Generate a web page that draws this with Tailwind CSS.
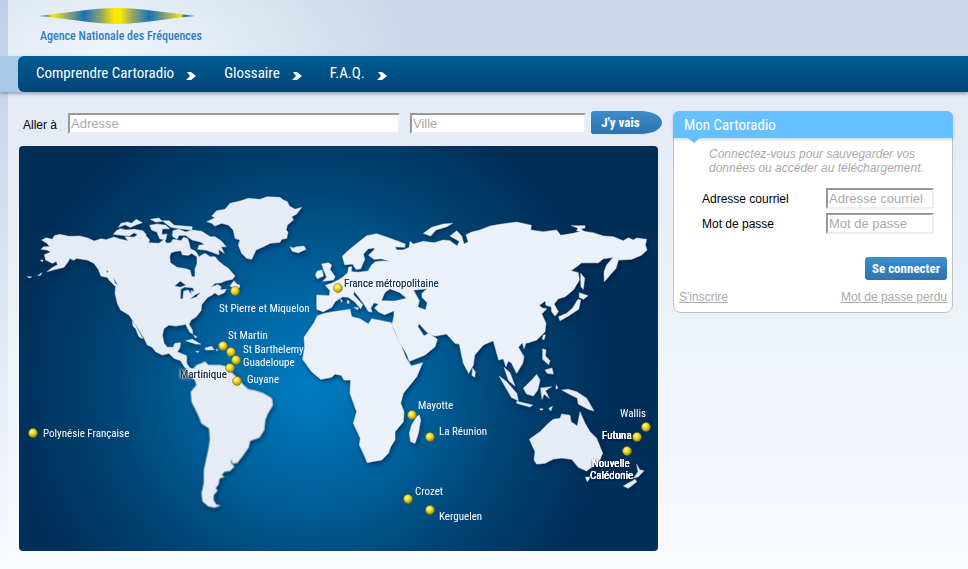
<!DOCTYPE html>
<html lang="fr">
<head>
    <meta charset="UTF-8">
    <meta name="viewport" content="width=device-width, initial-scale=1.0">
    <title>Cartoradio</title>
    <script src="https://cdn.jsdelivr.net/npm/@tailwindcss/browser@4"></script>
</head>
<body class="min-h-screen bg-linear-to-b from-[#e4ebf5] from-20% to-[#f8fafe] font-['Liberation_Sans',Arial,sans-serif] text-xs text-black">
    <div class="min-h-screen bg-linear-to-b from-[#bfd0e6] to-[#f8fafe] pl-2">
        <div class="min-h-screen bg-linear-to-b from-[#e4ebf5] from-20% to-[#f8fafe]">
            <header class="h-14 bg-[#cbd8e9] bg-[radial-gradient(ellipse_300px_150px_at_100px_56px,#f0f4fa,#e2eaf4_40%,#cbd8e9)] pl-[31px] pt-2">
                <a href="/" class="block w-[156px]">
                    <svg class="h-4 w-full" viewBox="0 0 156 16" aria-hidden="true">
                        <defs>
                            <linearGradient id="wave">
                                <stop offset="0" stop-color="#2378b5" />
                                <stop offset=".05" stop-color="#7ba27c" />
                                <stop offset=".09" stop-color="#f4e500" />
                                <stop offset=".17" stop-color="#a0ae62" />
                                <stop offset=".29" stop-color="#1772b8" />
                                <stop offset=".4" stop-color="#91a768" />
                                <stop offset=".48" stop-color="#f8e800" />
                                <stop offset=".52" stop-color="#f8e800" />
                                <stop offset=".6" stop-color="#91a768" />
                                <stop offset=".71" stop-color="#1772b8" />
                                <stop offset=".83" stop-color="#a0ae62" />
                                <stop offset=".91" stop-color="#f4e500" />
                                <stop offset=".93" stop-color="#2378b5" />
                                <stop offset="1" stop-color="#2378b5" />
                            </linearGradient>
                        </defs>
                        <path d="M0 8 C25 5 55 0 78 0 C101 0 131 5 156 8 C131 10 101 16 78 16 C55 16 25 10 0 8Z" fill="url(#wave)" />
                    </svg>
                    <span class="mt-1 block whitespace-nowrap pl-px font-['Roboto_Condensed',sans-serif] text-xs leading-4 font-medium text-[#2c7fbd]">Agence Nationale des Fréquences</span>
                </a>
            </header>

            <div class="-ml-2 bg-[#a9c8e6] pl-[18px] shadow-[0_2px_3px_rgba(60,80,110,0.45)]">
                <nav class="flex h-9 items-center gap-7 rounded-l-md bg-linear-to-b from-[#005b94] to-[#004675] pl-[18px] font-['Roboto_Condensed',sans-serif] text-[15px] text-white">
                    <a href="#comprendre" class="flex items-center gap-3">Comprendre Cartoradio
                        <svg class="mt-1 h-2 w-[10px]" viewBox="0 0 10 8" fill="currentColor"><path d="M1 0 H5 L10 4 L5 8 H0 L4 4Z" /></svg>
                    </a>
                    <a href="#glossaire" class="flex items-center gap-3">Glossaire
                        <svg class="mt-1 h-2 w-[10px]" viewBox="0 0 10 8" fill="currentColor"><path d="M1 0 H5 L10 4 L5 8 H0 L4 4Z" /></svg>
                    </a>
                    <a href="#faq" class="flex items-center gap-3">F.A.Q.
                        <svg class="mt-1 h-2 w-[10px]" viewBox="0 0 10 8" fill="currentColor"><path d="M1 0 H5 L10 4 L5 8 H0 L4 4Z" /></svg>
                    </a>
                </nav>
            </div>

            <main class="grid grid-cols-[1fr_280px] items-start gap-[15px] pt-[19px] pr-[15px] pb-4 pl-[11px]">
                <section>
                    <form class="-mr-1 mb-3 flex h-[23px] items-center pl-1">
                        <label for="adresse" class="mr-[11px] whitespace-nowrap pt-1">Aller à</label>
                        <input type="text" id="adresse" placeholder="Adresse" class="mr-[10px] mt-px h-[21px] w-0 flex-23 border-2 border-t-[#999] border-r-[#eee] border-b-[#eee] border-l-[#999] bg-white px-px text-[13px] placeholder:text-[#a9a9a9]">
                        <input type="text" id="ville" placeholder="Ville" aria-label="Ville" class="mr-[5px] mt-px h-[21px] w-0 flex-12 border-2 border-t-[#999] border-r-[#eee] border-b-[#eee] border-l-[#999] bg-white px-px text-[13px] placeholder:text-[#a9a9a9]">
                        <button type="submit" class="h-[23px] w-[71px] rounded-[3px_22px_22px_3px/3px_12px_12px_3px] bg-linear-to-b from-[#3d8ecb] to-[#2d73b0] pr-3 font-['Roboto_Condensed',sans-serif] text-[13px] leading-5 font-bold text-white">J'y vais</button>
                    </form>

                    <svg class="block w-full rounded-[4px]" viewBox="19 146 639 405" role="img" aria-label="Carte du monde">
                        <defs>
                            <radialGradient id="sea" gradientUnits="userSpaceOnUse" cx="310" cy="385" r="300">
                                <stop offset="0" stop-color="#007ec3" />
                                <stop offset=".35" stop-color="#00629d" />
                                <stop offset=".7" stop-color="#004272" />
                                <stop offset="1" stop-color="#002f59" />
                            </radialGradient>
                            <radialGradient id="pin" cx=".4" cy=".35" r=".65">
                                <stop offset="0" stop-color="#fffbb0" />
                                <stop offset=".4" stop-color="#f4df2c" />
                                <stop offset="1" stop-color="#a88a00" />
                            </radialGradient>
                            <filter id="shadow" x="-5%" y="-5%" width="110%" height="115%">
                                <feDropShadow dx="1" dy="2" stdDeviation="2" flood-color="#001c3c" flood-opacity=".7" />
                            </filter>
                            <filter id="glow" x="-20%" y="-50%" width="140%" height="200%">
                                <feDropShadow dx="0" dy="0" stdDeviation="1.5" flood-color="#fff" flood-opacity="1" result="halo" />
                                <feMerge><feMergeNode in="halo" /><feMergeNode in="halo" /><feMergeNode in="SourceGraphic" /></feMerge>
                            </filter>
                            <filter id="dark" x="-20%" y="-50%" width="140%" height="200%">
                                <feDropShadow dx="0" dy="1" stdDeviation="1" flood-color="#001c3c" flood-opacity="1" result="halo" />
                                <feMerge><feMergeNode in="halo" /><feMergeNode in="halo" /><feMergeNode in="SourceGraphic" /></feMerge>
                            </filter>
                        </defs>
                        <rect x="19" y="146" width="639" height="405" fill="url(#sea)" />

                        <g fill="#e5ecf6" fill-rule="evenodd" stroke="#e5ecf6" stroke-width="1" stroke-linejoin="round" filter="url(#shadow)">
                            <!-- Amérique du Nord -->
                            <g transform="translate(19 190) scale(.3333)">
                                <path d="M68 150 L82 143 L100 148 L106 137 L122 133 L150 139 L182 138 L206 144 L226 153 L246 146 L262 149 L284 141 L302 147 L328 153 L318 140 L345 142 L362 130 L378 134 L392 150 L388 158 L420 160 L436 148 L442 160 L456 158 L462 148 L486 152 L494 142 L506 146 L510 158 L514 176 L530 184 L540 200 L558 190 L573 200 L588 200 L598 212 L613 225 L628 235 L648 258 L640 268 L620 272 L606 278 L588 280 L576 292 L596 284 L606 290 L604 300 L622 298 L616 308 L598 316 L588 308 L578 316 L566 322 L556 334 L548 344 L546 362 L530 382 L516 390 L510 403 L520 420 L521 432 L512 426 L500 403 L470 408 L450 405 L435 415 L430 435 L435 460 L445 472 L462 472 L468 460 L485 458 L482 475 L475 486 L490 492 L503 497 L503 520 L512 534 L535 540 L525 546 L497 532 L485 512 L465 505 L450 490 L430 495 L410 485 L400 472 L385 465 L375 444 L360 420 L350 404 L330 375 L305 360 L295 340 L288 310 L290 290 L272 272 L265 262 L246 258 L238 238 L225 220 L205 210 L172 205 L165 211 L152 205 L148 214 L135 232 L110 238 L84 245 L98 234 L116 224 L112 214 L100 220 L80 210 L76 194 L96 186 L84 180 L66 178 L74 170 L92 170 L84 160Z
                                    M452 200 L456 188 L470 184 L486 182 L490 194 L508 196 L518 190 L534 200 L534 222 L528 236 L528 260 L518 260 L513 240 L500 236 L474 232 L454 218Z
                                    M466 288 L484 273 L502 286 L484 292Z M484 328 L485 298 L496 291 L522 293 L526 306 L516 302 L518 314 L507 300 L494 304 L492 326Z M512 328 L528 314 L546 306 L532 322Z
                                    M262 240 L270 246 L264 248Z M282 262 L298 286 L288 280Z" />
                                <path d="M283 133 L292 122 L304 116 L322 120 L346 118 L372 122 L382 134 L366 140 L346 128 L330 138 L310 136Z M298 112 L306 100 L326 96 L338 100 L352 88 L370 98 L352 104 L334 112 L318 104Z M394 88 L420 84 L430 94 L410 96Z M392 106 L414 102 L440 106 L452 116 L430 116 L428 134 L444 132 L440 150 L422 146 L414 126 L398 120Z M430 92 L450 92 L466 106 L496 108 L520 110 L518 120 L484 116 L456 112Z
                                    M462 122 L480 118 L500 126 L520 120 L548 124 L574 140 L588 140 L606 152 L622 170 L606 170 L616 190 L598 178 L600 194 L578 186 L560 180 L536 178 L540 166 L556 164 L546 156 L520 150 L500 136 L480 136 L474 148 L460 138Z" />
                                <path d="M24 260 L38 260 L32 264Z M56 257 L68 248 L66 255Z M64 210 L72 210 L70 216Z M340 393 L348 402 L360 425 L372 446 L360 440 L350 416 L342 408Z M242 238 L250 244 L258 260 L248 254Z" />
                                <path d="M500 452 L520 448 L546 463 L530 462Z M558 474 L578 469 L586 479 L560 480Z M530 483 L540 484 L536 488Z M592 478 L598 480 L592 482Z M524 436 L534 440 L530 444Z" />
                            </g>
                            <!-- Groenland, Islande, Terre-Neuve -->
                            <g transform="translate(180 190) scale(.3333)">
                                <path d="M80 95 L105 83 L95 78 L110 62 L135 58 L150 40 L180 33 L205 25 L240 28 L262 20 L300 22 L310 30 L322 35 L328 48 L345 58 L365 52 L350 72 L335 80 L340 90 L322 105 L318 120 L324 126 L320 145 L305 148 L300 157 L270 160 L250 170 L228 180 L215 208 L200 205 L185 190 L175 165 L180 150 L165 145 L160 120 L145 105 L125 100 L104 108 L96 100Z" />
                                <path d="M330 170 L340 174 L350 170 L372 168 L378 178 L355 188 L337 184Z M150 288 L162 272 L170 282 L180 286 L176 296 L160 293Z" />
                            </g>
                            <!-- Amérique du Sud -->
                            <g transform="translate(180 360) scale(.3333)">
                                <path d="M18 22 L38 28 L50 15 L65 10 L75 5 L85 15 L120 15 L140 20 L155 38 L178 60 L190 75 L205 88 L225 92 L250 100 L275 115 L278 135 L262 162 L255 180 L252 210 L238 232 L210 242 L205 262 L190 284 L172 308 L158 310 L154 295 L152 308 L162 320 L150 332 L132 335 L124 346 L132 350 L118 355 L115 372 L106 385 L112 392 L100 405 L100 420 L108 434 L120 437 L102 442 L85 438 L68 424 L65 400 L72 370 L72 330 L85 270 L90 240 L88 205 L65 190 L55 165 L35 125 L33 95 L50 75 L45 60 L25 40Z" />
                            </g>
                            <!-- Eurasie et Afrique -->
                            <g transform="translate(300 200) scale(.3333)" fill="#ebf1f8" stroke="#ebf1f8">
                                <path d="M50 285 L88 287 L90 272 L76 256 L95 250 L115 240 L130 230 L143 218 L146 202 L155 200 L154 215 L175 217 L204 213 L214 196 L226 185 L250 183 L272 184 L244 176 L222 178 L206 166 L222 150 L225 143 L205 146 L190 162 L194 178 L182 206 L168 208 L158 192 L134 194 L127 168 L150 147 L175 127 L200 107 L230 101 L262 112 L290 122 L316 132 L314 142 L285 140 L290 150 L310 150 L328 142 L330 124 L340 132 L370 124 L402 128 L430 120 L450 122 L460 130 L472 138 L478 124 L450 108 L470 92 L485 108 L492 132 L505 126 L498 104 L515 96 L540 90 L570 78 L605 72 L650 66 L694 76 L692 90 L730 95 L770 90 L782 106 L820 100 L845 93 L880 98 L910 108 L940 110 L970 122 L985 113 L1000 120 L1010 114 L1040 118 L1036 134 L1041 150 L1025 165 L995 178 L955 180 L948 205 L930 225 L913 245 L912 215 L920 195 L940 172 L910 176 L895 188 L845 188 L830 200 L812 212 L835 218 L838 240 L820 270 L795 290 L775 296 L762 312 L775 335 L765 348 L755 335 L754 320 L738 316 L736 302 L718 316 L726 324 L740 326 L725 342 L738 370 L735 395 L710 420 L685 428 L665 430 L655 442 L672 470 L668 490 L650 520 L635 490 L625 482 L618 500 L610 476 L596 480 L580 422 L565 428 L550 435 L524 465 L520 495 L506 520 L490 490 L478 432 L465 430 L440 402 L405 408 L386 402 L378 394 L356 370 L354 380 L372 408 L386 400 L412 418 L405 440 L375 465 L328 484 L320 462 L298 426 L282 388 L276 374 L282 348 L282 332 L254 344 L236 336 L224 324 L236 312 L222 308 L212 324 L216 336 L205 334 L192 312 L174 288 L163 274 L160 284 L188 314 L182 326 L165 306 L145 292 L128 290 L105 305 L95 322 L70 335 L50 328Z
                                    M254 278 L270 266 L300 278 L320 295 L284 303 L244 302Z M340 270 L382 266 L366 280 L366 292 L382 308 L377 330 L353 321 L358 302Z" />
                                <path d="M75 340 L100 335 L150 328 L155 350 L180 356 L205 372 L215 356 L245 362 L274 368 L282 392 L304 438 L318 474 L334 498 L368 488 L350 530 L310 580 L302 610 L312 635 L310 665 L285 695 L285 720 L272 740 L265 760 L245 780 L215 785 L202 788 L190 760 L178 735 L181 715 L160 670 L170 635 L150 580 L152 540 L132 540 L124 526 L105 522 L95 532 L62 538 L35 515 L8 478 L14 440 L12 412 L42 368 L52 347Z" />
                                <path d="M65 192 L85 188 L95 195 L90 208 L105 230 L100 240 L68 244 L80 232 L72 212Z M52 213 L66 210 L70 228 L52 236 L46 225Z M370 100 L395 82 L430 72 L458 70 L440 80 L408 90 L392 108Z M142 302 h5 v8 h-5Z M162 322 l14 2 l-4 5Z M122 298 l5 4 l-3 5Z M240 374 L250 366 L246 372Z" />
                                <path d="M350 650 L358 645 L362 660 L355 700 L345 730 L332 725 L328 700 L335 675Z M518 505 L526 515 L524 532 L516 526Z" />
                                <path d="M814 77 L855 77 L855 84 L842 86 L854 96 L830 92 L834 84Z M842 220 L854 235 L850 268 L843 260Z M838 278 L864 287 L850 298 L838 292Z M834 298 L842 300 L836 328 L805 348 L780 362 L776 350 L800 340 L818 324Z M730 406 l6 -2 l-4 16 l-5 -4Z M668 430 l10 -2 l-6 18Z" />
                            </g>
                            <!-- Océanie -->
                            <g transform="translate(490 330) scale(.3333)">
                                <path d="M118 328 L150 305 L175 280 L190 268 L210 265 L215 252 L240 256 L243 275 L262 288 L270 245 L285 280 L300 305 L320 325 L338 370 L325 400 L300 415 L290 423 L265 412 L245 388 L215 384 L190 387 L165 400 L140 402 L132 390 L135 365Z M286 442 L302 440 L292 455Z M440 403 L450 420 L462 422 L445 440 L430 445 L444 426Z M435 448 L440 455 L415 475 L400 468Z" />
                                <path d="M215 180 L235 178 L260 185 L290 205 L312 243 L295 238 L265 222 L262 204 L245 196Z M100 175 L125 150 L140 133 L150 150 L143 180 L130 198 L110 192Z M27 138 L50 155 L80 190 L85 212 L64 202Z M42 112 L60 128 L75 168 L56 152Z M80 214 L128 225 L120 231 L80 220Z M152 174 L185 170 L166 182 L178 205 L162 192 L156 208Z M158 56 L168 60 L166 78 L180 92 L176 104 L158 88Z M165 120 L186 114 L190 132 L172 130Z M176 235 l12 -6 l-6 14Z M150 236 h8 v4 h-8Z M198 164 l6 10 l-6 4Z" />
                            </g>
                        </g>

                        <g fill="url(#pin)" stroke="#6d6a22" stroke-width=".5">
                            <circle cx="338" cy="288" r="4.5" />
                            <circle cx="235" cy="291" r="4.5" />
                            <circle cx="223" cy="346" r="4.5" />
                            <circle cx="231" cy="352" r="4.5" />
                            <circle cx="236" cy="360" r="4.5" />
                            <circle cx="230" cy="368" r="4.5" />
                            <circle cx="237" cy="381" r="4.5" />
                            <circle cx="412" cy="415" r="4.5" />
                            <circle cx="430" cy="437" r="4.5" />
                            <circle cx="408" cy="499" r="4.5" />
                            <circle cx="430" cy="510" r="4.5" />
                            <circle cx="33" cy="433" r="4.5" />
                            <circle cx="646" cy="427" r="4.5" />
                            <circle cx="637" cy="437" r="4.5" />
                            <circle cx="627" cy="451" r="4.5" />
                        </g>

                        <g class="font-['Roboto_Condensed',sans-serif] text-[11px]" fill="#fff">
                            <a href="#france"><text x="344" y="287" fill="#0b3a63" filter="url(#glow)">France métropolitaine</text></a>
                            <a href="#miquelon"><text x="219" y="312">St Pierre et Miquelon</text></a>
                            <a href="#martin"><text x="228" y="339">St Martin</text></a>
                            <a href="#barthelemy"><text x="243" y="353">St Barthelemy</text></a>
                            <a href="#guadeloupe"><text x="243" y="366">Guadeloupe</text></a>
                            <a href="#martinique"><text x="180" y="378" fill="#12304c" filter="url(#glow)">Martinique</text></a>
                            <a href="#guyane"><text x="247" y="383">Guyane</text></a>
                            <a href="#mayotte"><text x="418" y="409">Mayotte</text></a>
                            <a href="#reunion"><text x="439" y="435">La Réunion</text></a>
                            <a href="#crozet"><text x="415" y="495">Crozet</text></a>
                            <a href="#kerguelen"><text x="439" y="520">Kerguelen</text></a>
                            <a href="#polynesie"><text x="43" y="437">Polynésie Française</text></a>
                            <a href="#wallis"><text x="620" y="417">Wallis</text></a>
                            <a href="#futuna"><text x="602" y="439" filter="url(#dark)">Futuna</text></a>
                            <a href="#caledonie" filter="url(#dark)"><text x="592" y="467">Nouvelle</text><text x="590" y="479">Calédonie</text></a>
                        </g>
                    </svg>
                </section>

                <aside class="rounded-lg border border-[#bcc3cc] bg-white">
                    <h2 class="relative -mx-px -mt-px h-[27px] rounded-t-md bg-[#66c0ff] pl-[11px] font-['Roboto_Condensed',sans-serif] text-[15px] leading-7 text-white shadow-[0_2px_3px_rgba(0,0,0,0.15)]">Mon Cartoradio
                        <svg class="absolute top-full left-[15px] h-[5px] w-3" viewBox="0 0 12 5" fill="#66c0ff"><path d="M0 0 H12 L6 5Z" /></svg>
                    </h2>
                    <p class="mt-[9px] pl-[35px] leading-[14px] text-[#aaa] italic">Connectez-vous pour sauvegarder vos<br>données ou accéder au téléchargement.</p>
                    <form class="mt-[13px]">
                        <div class="mb-1 flex h-[21px] items-center justify-between pr-[18px] pl-7">
                            <label for="courriel">Adresse courriel</label>
                            <input type="email" id="courriel" placeholder="Adresse courriel" class="h-[21px] w-[108px] border-2 border-t-[#999] border-r-[#eee] border-b-[#eee] border-l-[#999] bg-white px-px text-[13px] placeholder:text-[#a9a9a9]">
                        </div>
                        <div class="flex h-[21px] items-center justify-between pr-[18px] pl-7">
                            <label for="passe">Mot de passe</label>
                            <input type="password" id="passe" placeholder="Mot de passe" class="h-[21px] w-[108px] border-2 border-t-[#999] border-r-[#eee] border-b-[#eee] border-l-[#999] bg-white px-px text-[13px] placeholder:text-[#a9a9a9]">
                        </div>
                        <div class="mt-[23px] flex justify-end pr-[5px]">
                            <button type="submit" class="h-[23px] w-[82px] rounded-[3px] bg-linear-to-b from-[#3d8ecb] to-[#2d73b0] font-['Roboto_Condensed',sans-serif] text-[13px] leading-5 font-bold text-white">Se connecter</button>
                        </div>
                    </form>
                    <div class="mt-[9px] flex justify-between px-[5px] pb-[7px] text-[#aaa] underline">
                        <a href="#inscrire">S'inscrire</a>
                        <a href="#perdu">Mot de passe perdu</a>
                    </div>
                </aside>
            </main>
        </div>
    </div>
</body>
</html>
